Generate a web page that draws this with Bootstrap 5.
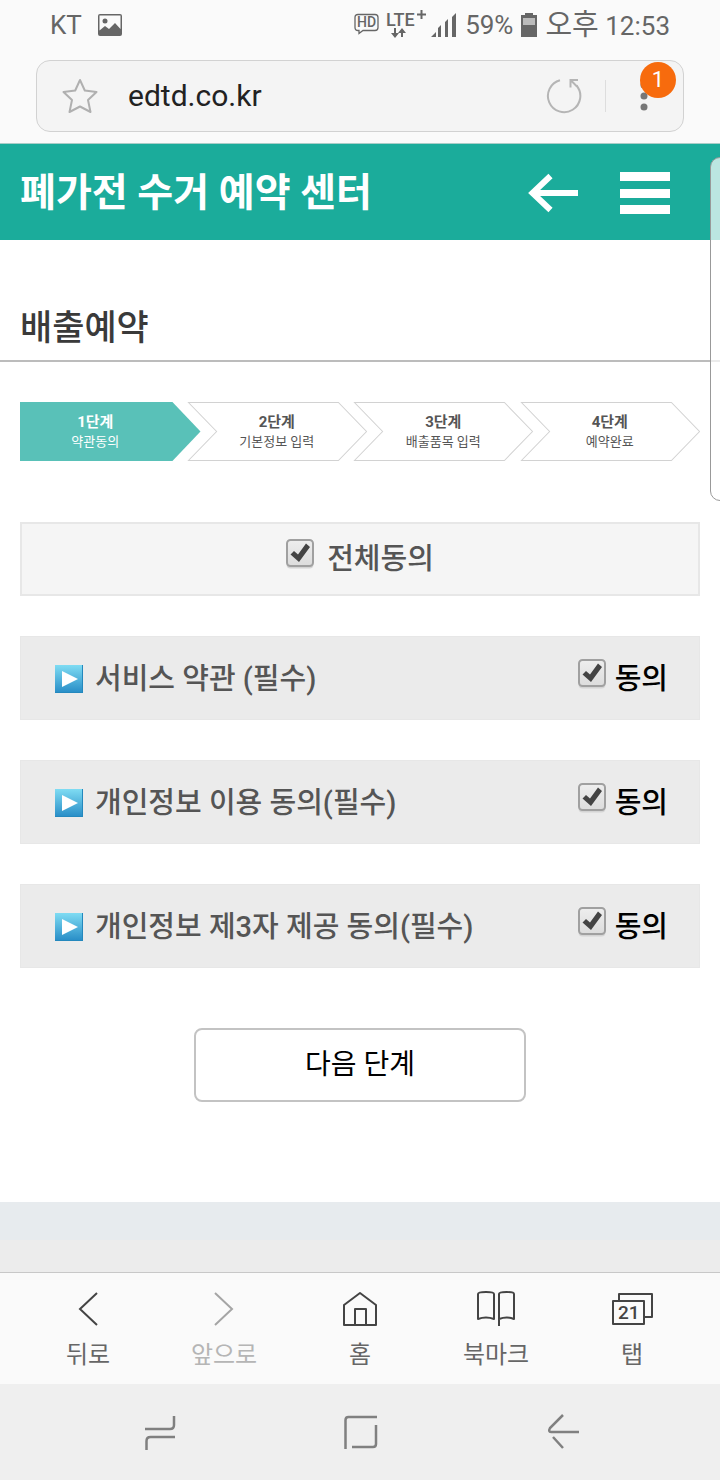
<!DOCTYPE html>
<html lang="ko">
<head>
<meta charset="utf-8">
<meta name="viewport" content="width=device-width, initial-scale=1">
<title>폐가전 수거 예약 센터</title>
<link href="https://cdn.jsdelivr.net/npm/bootstrap@5.3.0/dist/css/bootstrap.min.css" rel="stylesheet">
<style>
body{font-family:Roboto,"Noto Sans CJK KR",sans-serif;color:#000;background:#fff}
svg{display:block}
a{text-decoration:none}
.chrome-top{background:#fafafa;height:143px}
.status{height:50px;padding:0 50px;font-size:26px;line-height:36px;color:#666}
.ampm{font-size:29px}
.omnibox{margin:10px 36px 0;height:72px;background:#f4f4f4;border:1px solid #d2d2d2;border-radius:14px;padding:0 35px 0 24px}
.omnibox input{font-size:30px;line-height:40px;color:#222;background:none;border:0;outline:0;padding:0;margin-left:29px;min-width:0}
.sep{width:1px;height:32px;background:#ddd;margin:0 34px 0 23px}
.count{top:1px;right:7px;width:36px;height:36px;border-radius:50%;background:#f76b0d;color:#fff;font-size:22px;line-height:36px}
.site-head{background:#1bac9b;border-top:1px solid #a9cdc8;height:97px;padding:2px 50px 0 20px}
.site-head h1{font-size:39px;line-height:48px;font-weight:700;color:#fff}
.plain{background:none;border:0;padding:0;color:inherit}
.page-title{height:122px;padding:65px 20px 0;border-bottom:2px solid #bcbcbc;font-size:35px;line-height:48px;font-weight:500;color:#3a3a3a}
.steps{margin:40px 20px 0;height:59px;font-size:13px;line-height:20px;color:#555}
.steps li{flex:1 1 0}
.steps li + li{margin-left:-14px}
.steps strong{font-size:15px}
.steps .now{color:#fff}
.now strong,.now span{padding-right:30px}
.agree-all{margin:61px 20px 0;height:74px;background:#f5f5f5;border:2px solid #e7e7e7}
.term{margin:40px 20px 0;height:84px;background:#ebebeb;border:1px solid #e7e7e7;padding:2px 31px 0 34px}
.tx{font-size:29px;line-height:40px;font-weight:500}
.grey{color:#555}
.tick{appearance:none;width:28px;height:30px;margin:0 1px 11px 0;flex:none;background:url("data:image/svg+xml,%3Csvg xmlns='http://www.w3.org/2000/svg' viewBox='0 0 28 30'%3E%3Cdefs%3E%3ClinearGradient id='g' x2='0' y2='1'%3E%3Cstop stop-color='%23eee'/%3E%3Cstop offset='1' stop-color='%23dcdcdc'/%3E%3C/linearGradient%3E%3C/defs%3E%3Crect x='.5' y='1.5' width='27' height='28' rx='4' fill='%23d4d4d4'/%3E%3Crect x='1' y='1' width='26' height='26' rx='3.500' fill='url(%23g)' stroke='%23a0a0a0' stroke-width='2'/%3E%3C/svg%3E") center/100% 100% no-repeat}
.tick:checked{background-image:url("data:image/svg+xml,%3Csvg xmlns='http://www.w3.org/2000/svg' viewBox='0 0 28 30'%3E%3Cdefs%3E%3ClinearGradient id='g' x2='0' y2='1'%3E%3Cstop stop-color='%23eee'/%3E%3Cstop offset='1' stop-color='%23dcdcdc'/%3E%3C/linearGradient%3E%3C/defs%3E%3Crect x='.5' y='1.5' width='27' height='28' rx='4' fill='%23d4d4d4'/%3E%3Crect x='1' y='1' width='26' height='26' rx='3.500' fill='url(%23g)' stroke='%23a0a0a0' stroke-width='2'/%3E%3Cpath d='M4.500 15.500 8 12l4 3.500L20 4.500l4 3.500-11 15z' fill='%23444'/%3E%3C/svg%3E")}
.next{margin:60px auto 100px;width:332px;height:74px;border:2px solid #c3c3c3;border-radius:8px;background:#fff;font-size:28px;line-height:40px;color:#000}
.next:hover{background:#f5f5f5;border-color:#c3c3c3}
.foot-a{background:#e7ebee;height:38px}
.foot-b{background:#ececec;min-height:32px}
.tools{background:#fafafa;border-top:1px solid #c8c8c8;height:112px;padding:14px 20px 0;font-size:24px;line-height:40px}
.tools a{flex:1 1 0;color:#666}
.tools a.off{color:#b5b5b5}
.tools svg{margin-bottom:4px}
.keys{background:#efefef;height:96px;padding:0 58px 0 60px}
.keys .plain{flex:1 1 0}
.edge{top:157px;right:-10px;width:20px;height:344px;border:1px solid #999;border-radius:12px;background:rgba(255,255,255,.7)}
</style>
</head>
<body>
<div class="position-relative overflow-hidden min-vh-100 d-flex flex-column">
<header class="chrome-top">
  <div class="status d-flex align-items-center justify-content-between">
    <div class="d-flex align-items-center gap-3">
      <span>KT</span>
      <svg width="24" height="22" viewBox="0 0 24 22"><path fill="#666" fill-rule="evenodd" d="M2 0h20a2 2 0 0 1 2 2v18a2 2 0 0 1-2 2H2a2 2 0 0 1-2-2V2a2 2 0 0 1 2-2zM1.500 1.500v15L7 12l4 3 6-6 5.500 6V1.500z"/><circle cx="7" cy="7" r="2.500" fill="#666"/></svg>
    </div>
    <div class="d-flex align-items-center gap-2">
      <svg width="103" height="30" viewBox="0 0 103 30" fill="none" stroke="#666"><path stroke-width="1.300" d="M4 4.500h17q3 0 3 3v10q0 3-3 3H9l-4 3v-3H4q-3 0-3-3v-10q0-3 3-3z"/><text x="3" y="17" font-size="14" font-weight="500" font-family="Roboto" fill="#666" stroke="none">HD</text><text x="32" y="16" font-size="18" font-weight="500" font-family="Roboto" fill="#666" stroke="none">LTE</text><path stroke-width="2" d="M63 4.500h9M67.500 0v9M41 18v6M48 27v-6"/><path fill="#666" stroke="none" d="m37 23 4 5 4-5zM44 23l4-5 4 5zM77 27l5-5v5zM84 27v-9l3-3v12zM91 27V12l3-3v18zM98 27V7l4-4v24z"/></svg>
      <span>59%</span>
      <svg width="16" height="24" viewBox="0 0 16 24"><path fill="#666" d="M4 0h8v2h4v22H0V2h4z"/><path fill="#bbb" d="M2 5h12v7H2z"/></svg>
      <span><span class="ampm">오후</span> 12:53</span>
    </div>
  </div>
  <div class="omnibox position-relative d-flex align-items-center">
    <button class="plain" aria-label="북마크 추가"><svg width="38" height="38" viewBox="0 0 38 38" fill="none" stroke="#b0b0b0" stroke-width="2" stroke-linejoin="round"><path d="m19 3 4.800 10.500L35.500 15l-8.500 8 2.500 12L19 29.500 8.500 35 11 23l-8.500-8 11.700-1.500z"/></svg></button>
    <input class="flex-grow-1" type="text" value="edtd.co.kr" aria-label="주소">
    <button class="plain" aria-label="새로고침"><svg width="36" height="36" viewBox="0 0 36 36" fill="none" stroke="#b5b5b5" stroke-width="2"><path d="M14 2.300A16.200 16.200 0 1 0 30.500 7.500"/><path d="M32 2h-7.500v7.500M25 2.500l6 6"/></svg></button>
    <span class="sep"></span>
    <button class="plain" aria-label="메뉴"><svg width="8" height="32" viewBox="0 0 8 32" fill="#777"><circle cx="4" cy="5" r="3.500"/><circle cx="4" cy="16" r="3.500"/><circle cx="4" cy="27" r="3.500"/></svg></button>
    <span class="count position-absolute text-center">1</span>
  </div>
</header>

<div class="site-head d-flex align-items-center">
  <h1 class="m-0 flex-grow-1">폐가전 수거 예약 센터</h1>
  <button class="plain me-4" aria-label="뒤로"><svg width="68" height="42" viewBox="0 0 68 42" fill="none" stroke="#fff" stroke-width="6"><path d="M4 21h46"/><path d="M22.500 4 4.500 21l18 17"/></svg></button>
  <button class="plain" aria-label="전체 메뉴"><svg width="50" height="42" viewBox="0 0 50 42" fill="#fff"><path d="M0 0h50v9H0zM0 17h50v9H0zM0 33h50v9H0z"/></svg></button>
</div>

<main class="flex-grow-1">
  <h2 class="page-title m-0">배출예약</h2>
  <ol class="steps list-unstyled d-flex mb-0 text-center">
    <li class="now position-relative d-flex flex-column justify-content-center" aria-current="step"><svg class="position-absolute top-0 start-0 w-100 h-100" viewBox="0 0 180 59" preserveAspectRatio="none"><path fill="#59c1b8" d="M0 0h152l28 29.500L152 59H0z"/></svg><strong class="position-relative">1단계</strong><span class="position-relative">약관동의</span></li>
    <li class="position-relative d-flex flex-column justify-content-center"><svg class="position-absolute top-0 start-0 w-100 h-100" viewBox="0 0 180 59" preserveAspectRatio="none"><path fill="none" stroke="#d2d2d2" d="M1.500.5H151l28 29-28 29H1.500l28-29z"/></svg><strong>2단계</strong><span>기본정보 입력</span></li>
    <li class="position-relative d-flex flex-column justify-content-center"><svg class="position-absolute top-0 start-0 w-100 h-100" viewBox="0 0 180 59" preserveAspectRatio="none"><path fill="none" stroke="#d2d2d2" d="M1.500.5H151l28 29-28 29H1.500l28-29z"/></svg><strong>3단계</strong><span>배출품목 입력</span></li>
    <li class="position-relative d-flex flex-column justify-content-center"><svg class="position-absolute top-0 start-0 w-100 h-100" viewBox="0 0 180 59" preserveAspectRatio="none"><path fill="none" stroke="#d2d2d2" d="M1.500.5H151l28 29-28 29H1.500l28-29z"/></svg><strong>4단계</strong><span>예약완료</span></li>
  </ol>

  <div class="agree-all d-flex align-items-center justify-content-center">
    <input class="tick" type="checkbox" id="all" checked><label class="tx grey ps-2 ms-1" for="all">전체동의</label>
  </div>

  <svg width="0" height="0" class="position-absolute" aria-hidden="true"><defs><linearGradient id="blue" x2="0" y2="1"><stop stop-color="#7fdcf3"/><stop offset="1" stop-color="#2a8fc8"/></linearGradient><symbol id="play" viewBox="0 0 28 28"><path fill="#2488bd" d="M0 0h28v28H0z"/><path fill="url(#blue)" d="M0 0h27v27H0z"/><path fill="#fff" d="m7 6 16 8-16 8z"/></symbol></defs></svg>

  <div class="term d-flex align-items-center">
    <button class="plain tx grey d-flex align-items-center flex-grow-1"><svg class="me-2" width="32" height="28" viewBox="0 0 32 28"><use href="#play" width="28" height="28"/></svg>서비스 약관 (필수)</button>
    <input class="tick" type="checkbox" id="t1" checked><label class="tx ps-2" for="t1">동의</label>
  </div>
  <div class="term d-flex align-items-center">
    <button class="plain tx grey d-flex align-items-center flex-grow-1"><svg class="me-2" width="32" height="28" viewBox="0 0 32 28"><use href="#play" width="28" height="28"/></svg>개인정보 이용 동의(필수)</button>
    <input class="tick" type="checkbox" id="t2" checked><label class="tx ps-2" for="t2">동의</label>
  </div>
  <div class="term d-flex align-items-center">
    <button class="plain tx grey d-flex align-items-center flex-grow-1"><svg class="me-2" width="32" height="28" viewBox="0 0 32 28"><use href="#play" width="28" height="28"/></svg>개인정보 제3자 제공 동의(필수)</button>
    <input class="tick" type="checkbox" id="t3" checked><label class="tx ps-2" for="t3">동의</label>
  </div>
  <button class="next btn d-block">다음 단계</button>
  <div class="foot-a"></div>
</main>
<div class="foot-b"></div>

<nav class="tools d-flex text-center">
  <a href="#"><svg class="mx-auto" width="44" height="44" viewBox="0 0 44 44" fill="none" stroke="#444" stroke-width="2"><path d="M31 6 14 22l17 16"/></svg>뒤로</a>
  <a href="#" class="off"><svg class="mx-auto" width="44" height="44" viewBox="0 0 44 44" fill="none" stroke="#a5a5a5" stroke-width="2"><path d="m13 6 17 16-17 16"/></svg>앞으로</a>
  <a href="#"><svg class="mx-auto" width="44" height="44" viewBox="0 0 44 44" fill="none" stroke="#444" stroke-width="2" stroke-linejoin="round"><path d="M6 18 22 6l16 12v20H6zM17 38V22h11v16"/></svg>홈</a>
  <a href="#"><svg class="mx-auto" width="44" height="44" viewBox="0 0 44 44" fill="none" stroke="#444" stroke-width="2" stroke-linejoin="round"><path d="M4 32V7q0-2 8-2t8 2v25q-8-3-16 0zM25 39V7q0-2 7.500-2T40 7v25q-7-3-15 0"/></svg>북마크</a>
  <a href="#"><svg class="mx-auto" width="44" height="44" viewBox="0 0 44 44" fill="none" stroke="#444" stroke-width="2" stroke-linejoin="round"><path d="M9 14V7h33v23h-8"/><path d="M3 14h31v23H3z"/><text x="8" y="32" font-family="Roboto" font-size="19" font-weight="500" fill="#444" stroke="none">21</text></svg>탭</a>
</nav>
<div class="keys d-flex align-items-center">
  <button class="plain" aria-label="최근 앱"><svg class="mx-auto" width="36" height="40" viewBox="0 0 36 40" fill="none" stroke="#808080" stroke-width="2.500"><path d="M3 17h25q4 0 4-4V4M4.500 38V29q0-4 4-4H33"/></svg></button>
  <button class="plain" aria-label="홈"><svg class="mx-auto" width="36" height="40" viewBox="0 0 36 40" fill="none" stroke="#808080" stroke-width="2.500"><path d="M2.500 37V8q0-3 3-3H34M9 35h21q3 0 3-3V13"/></svg></button>
  <button class="plain" aria-label="뒤로"><svg class="mx-auto" width="36" height="40" viewBox="0 0 36 40" fill="none" stroke="#808080" stroke-width="2.500"><path d="M19 3 6 16q-2 4 1 4h28M9 25l10 11"/></svg></button>
</div>
<div class="edge position-absolute"></div>
</div>
<script src="https://cdn.jsdelivr.net/npm/bootstrap@5.3.0/dist/js/bootstrap.bundle.min.js"></script>
</body>
</html>
